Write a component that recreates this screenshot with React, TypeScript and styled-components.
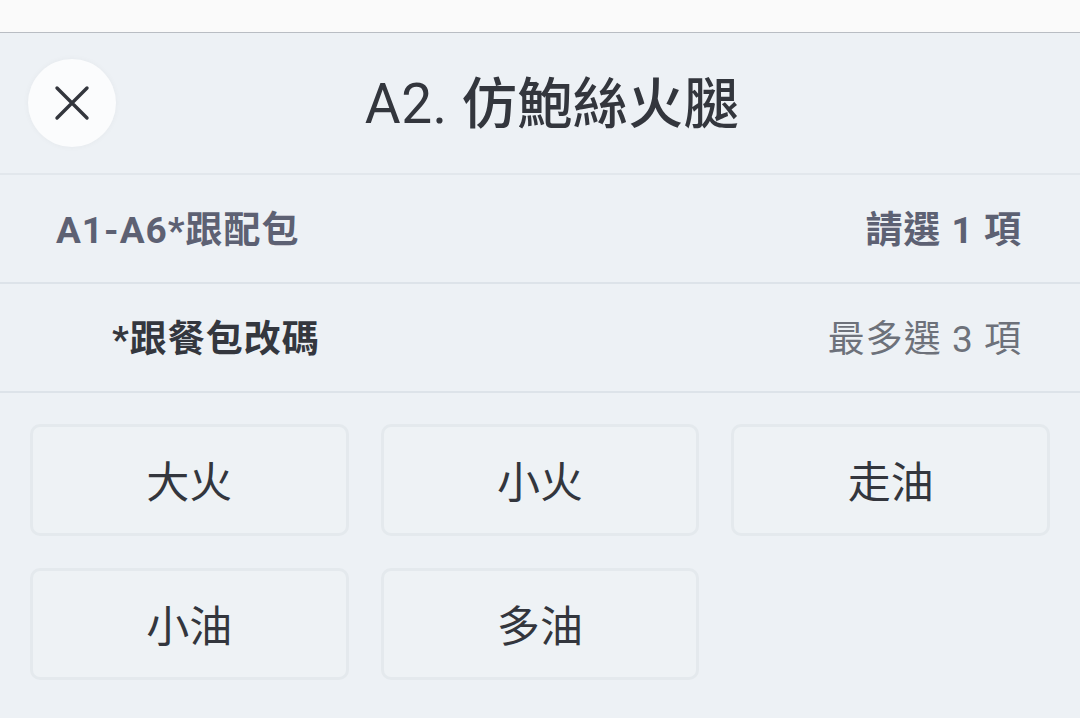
import * as React from 'react'
import styled, { createGlobalStyle } from 'styled-components'

const GlobalStyle = createGlobalStyle`
  html, body {
    margin: 0;
    padding: 0;
    background: #edf1f5;
    font-family: Roboto, "Noto Sans CJK TC", "Noto Sans", sans-serif;
    color: #33363d;
  }
`

const Page = styled.div`
  width: 1080px;
  height: 718px;
  overflow: hidden;
  background: #edf1f5;
`

const TopStrip = styled.div`
  height: 32px;
  background: #fafafa;
  border-bottom: 1px solid #b9bdc3;
`

const Header = styled.header`
  display: grid;
  grid-template-columns: 1fr auto 1fr;
  align-items: center;
  height: 140px;
  border-bottom: 2px solid #e2e7ec;
`

const CloseButton = styled.button`
  justify-self: start;
  margin-left: 28px;
  width: 88px;
  height: 88px;
  border: none;
  border-radius: 50%;
  background: #fbfcfd;
  box-shadow: 0 0 6px rgba(0, 0, 0, 0.04);
  display: flex;
  align-items: center;
  justify-content: center;
  padding: 0;
`

const Title = styled.h1`
  margin: 0 0 8px 24px;
  font-size: 55px;
  font-weight: 400;
  color: #33363d;
  letter-spacing: 0.5px;
`

const TitleName = styled.span`
  font-weight: 500;
`

const Row = styled.div<{ $indent: number }>`
  display: flex;
  align-items: center;
  justify-content: space-between;
  height: 109px;
  padding: 0 58px 4px ${p => p.$indent}px;
  box-sizing: border-box;
  border-bottom: 2px solid #dde3e9;
`

const RowLabel = styled.span<{ $tone: 'muted' | 'dark' }>`
  font-size: 37px;
  font-weight: 700;
  color: ${p => (p.$tone === 'muted' ? '#5d6173' : '#34373e')};
  letter-spacing: 1px;
`

const RowHint = styled.span<{ $bold?: boolean }>`
  font-size: 37px;
  font-weight: ${p => (p.$bold ? 700 : 400)};
  color: ${p => (p.$bold ? '#5d6173' : '#6d717a')};
  letter-spacing: 1px;
`

const OptionGrid = styled.div`
  display: grid;
  grid-template-columns: repeat(3, 1fr);
  gap: 32px;
  padding: 31px 30px;
`

const Option = styled.button`
  height: 112px;
  border: 3px solid #e4e9ed;
  border-radius: 10px;
  background: #eef2f5;
  font-family: Roboto, "Noto Sans CJK TC", sans-serif;
  font-size: 43px;
  color: #33363d;
  display: flex;
  align-items: center;
  justify-content: center;
  padding: 0 0 2px;
`

const options = ['大火', '小火', '走油', '小油', '多油']

const CloseIcon = () => (
  <svg width='36' height='36' viewBox='0 0 36 36' fill='none'>
    <path d='M3 3 L33 33 M33 3 L3 33' stroke='#33363d' strokeWidth='3.4' strokeLinecap='round' />
  </svg>
)

const App = () => {
  return (
    <Page>
      <GlobalStyle />
      <TopStrip />
      <Header>
        <CloseButton aria-label='close'>
          <CloseIcon />
        </CloseButton>
        <Title>
          A2. <TitleName>仿鮑絲火腿</TitleName>
        </Title>
        <div />
      </Header>
      <Row $indent={56}>
        <RowLabel $tone='muted'>A1-A6*跟配包</RowLabel>
        <RowHint $bold>請選 1 項</RowHint>
      </Row>
      <Row $indent={112}>
        <RowLabel $tone='dark'>*跟餐包改碼</RowLabel>
        <RowHint>最多選 3 項</RowHint>
      </Row>
      <OptionGrid>
        {options.map(o => (
          <Option key={o}>{o}</Option>
        ))}
      </OptionGrid>
    </Page>
  )
}

export default App
